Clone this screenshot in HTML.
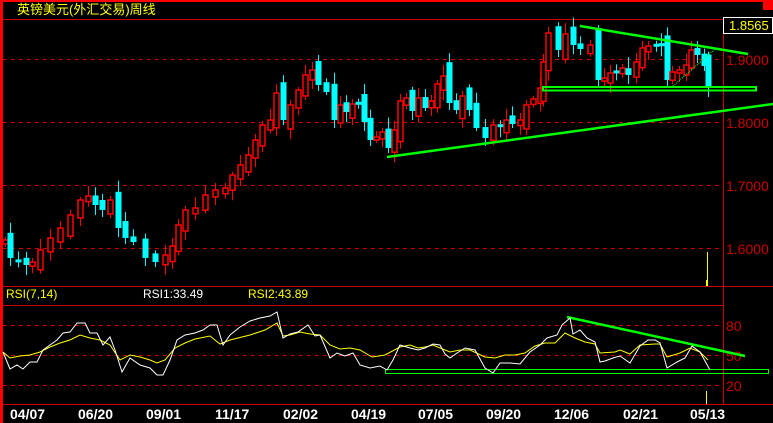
<!DOCTYPE html>
<html><head><meta charset="utf-8"><style>
html,body{margin:0;padding:0;background:#000;width:773px;height:423px;overflow:hidden}
svg{display:block}
text{font-family:"Liberation Sans","Noto Sans CJK SC",sans-serif}
</style></head><body>
<svg id="s" width="773" height="423" xmlns="http://www.w3.org/2000/svg">
<rect width="773" height="423" fill="#000"/>
<rect x="0" y="0" width="773" height="2" fill="#f00"/>
<rect x="0" y="0" width="3" height="423" fill="#f00"/>
<rect x="763" y="2" width="10" height="8" fill="#f00"/>
<text x="17" y="14" fill="#ff0" font-size="13">英镑美元(外汇交易)周线</text>
<line x1="3" y1="19.5" x2="773" y2="19.5" stroke="#c00"/>
<g stroke="#c00" stroke-dasharray="4,4">
<line x1="3" y1="59.5" x2="723" y2="59.5"/>
<line x1="3" y1="122.5" x2="723" y2="122.5"/>
<line x1="3" y1="185.5" x2="723" y2="185.5"/>
<line x1="3" y1="248.5" x2="723" y2="248.5"/>
<line x1="3" y1="325.5" x2="723" y2="325.5"/>
<line x1="3" y1="355.5" x2="723" y2="355.5"/>
<line x1="3" y1="385.5" x2="723" y2="385.5"/>
</g>
<line x1="3" y1="286.5" x2="773" y2="286.5" stroke="#c00"/>
<line x1="3" y1="305.5" x2="723" y2="305.5" stroke="#c00"/>
<line x1="3" y1="404.5" x2="773" y2="404.5" stroke="#c00"/>
<line x1="723.5" y1="19" x2="723.5" y2="405" stroke="#c00"/>
<g fill="#c00" font-size="14">
<text x="726" y="65">1.9000</text><text x="726" y="128">1.8000</text>
<text x="726" y="191">1.7000</text><text x="726" y="254">1.6000</text>
<text x="726" y="331">80</text><text x="726" y="361">50</text><text x="726" y="391">20</text>
</g>
<rect x="723.5" y="17.5" width="49" height="16" fill="#000" stroke="#fff"/>
<text x="729" y="30" fill="#ff0" font-size="13">1.8565</text>
<text x="6" y="298" fill="#ff0" font-size="12">RSI(7,14)</text>
<text x="143" y="298" fill="#fff" font-size="12">RSI1:33.49</text>
<text x="248" y="298" fill="#ff0" font-size="12">RSI2:43.89</text>
<g id="candles"></g>
<line x1="707.5" y1="252" x2="707.5" y2="286" stroke="#ff0"/>
<line x1="706.5" y1="280" x2="706.5" y2="286" stroke="#ff0"/>
<line x1="706.5" y1="391" x2="706.5" y2="404" stroke="#ff0"/>
<g stroke="#0f0" fill="none">
<line x1="580" y1="26" x2="748" y2="54" stroke-width="2.5"/>
<rect x="543" y="87" width="213" height="3.5" stroke-width="2"/>
<line x1="387" y1="157" x2="773" y2="104" stroke-width="2.5"/>
<line x1="673" y1="86" x2="714" y2="50" stroke-width="1" stroke-dasharray="1,1"/>
<line x1="567" y1="317" x2="745" y2="356" stroke-width="2.5"/>
<rect x="385.5" y="369.5" width="383" height="4" stroke-width="1"/>
</g>
<polyline fill="none" stroke="#ff0" stroke-width="1" points="3,352 10,358 20,356 30,355 40,352 50,347 60,343 70,340 80,335 90,338 100,340 110,345 120,360 130,355 140,357 150,360 157,363 165,360 175,348 185,343 195,339 210,336 220,344 230,340 250,335 265,330 277,323 283,336 290,335 300,332 310,334 320,335 330,345 340,349 350,348 360,350 372,357 385,355 400,347 410,345 418,348 425,347 433,345 440,348 450,352 460,350 470,350 485,357 495,358 505,355 515,355 525,353 535,346 545,343 555,343 565,333 575,338 585,342 595,344 600,353 615,352 620,350 630,354 640,345 655,344 660,344 667,357 680,353 690,348 700,352 708,360"/>
<polyline fill="none" stroke="#fff" stroke-width="1" points="3,352 10,369 17,365 23,369 30,362 37,362 43,350 50,345 57,340 63,333 70,332 77,323 85,323 90,333 97,333 103,345 110,337 115,350 122,372 130,358 140,365 150,368 157,375 163,375 170,360 177,340 185,335 195,333 203,330 210,325 217,325 223,345 230,335 240,327 250,321 260,318 270,316 277,312 283,338 290,334 298,332 308,325 315,336 320,335 330,358 337,353 345,356 353,353 360,365 370,368 380,366 387,370 393,360 400,345 410,348 418,350 425,348 433,344 440,345 445,354 450,358 457,353 465,348 475,350 485,368 493,373 500,363 510,363 520,364 530,352 540,345 547,338 557,335 562,325 570,318 573,334 580,330 587,338 595,342 600,362 605,361 613,358 620,356 630,363 640,346 648,340 655,340 660,343 667,368 677,362 685,358 692,346 700,352 710,370"/>
<g fill="#fff" font-family="Liberation Mono,monospace" font-weight="bold" font-size="14">
<text x="10" y="419">04/07</text><text x="78" y="419">06/20</text><text x="146" y="419">09/01</text>
<text x="215" y="419">11/17</text><text x="283" y="419">02/02</text><text x="351" y="419">04/19</text>
<text x="418" y="419">07/05</text><text x="486" y="419">09/20</text><text x="554" y="419">12/06</text>
<text x="623" y="419">02/21</text><text x="690" y="419">05/13</text>
</g>
</svg>
<script>
var p=[[5,240],[10,258],[18,262],[26,265],[32,262],[40,250],[50,238],[60,228],[70,215],[80,200],[88,196],[95,205],[102,210],[110,200],[118,228],[125,238],[133,242],[145,258],[155,262],[165,255],[172,246],[178,225],[185,210],[195,208],[205,195],[215,190],[225,188],[232,175],[240,165],[248,155],[255,140],[262,125],[270,120],[276,93],[283,120],[290,105],[298,90],[305,75],[312,70],[318,85],[326,92],[334,120],[340,105],[346,112],[352,104],[358,102],[364,122],[370,140],[376,137],[382,132],[388,148],[394,130],[400,101],[406,98],[412,111],[418,98],[425,108],[431,101],[437,84],[443,76],[449,103],[456,110],[462,96],[469,110],[476,128],[485,138],[493,125],[500,127],[506,120],[512,124],[520,120],[526,105],[533,99],[540,88],[543,62],[548,33],[558,50],[565,34],[573,45],[580,49],[590,45],[598,80],[604,78],[610,73],[616,72],[622,68],[628,75],[636,62],[642,48],[648,46],[656,44],[661,46],[667,80],[672,72],[679,70],[686,65],[691,50],[697,55],[704,66],[708,87]];
var g=document.getElementById('candles'),h='',prev=245;
for(var i=0;i<p.length;i++){var x=p[i][0],c=p[i][1],o=prev;prev=c;
o=c+(o-c)*1.4+((i%3)-1)*3;
var t=Math.min(o,c),b=Math.max(o,c);if(b-t<3){b=t+3;}
var hi=t-3-(i*7%9),lo=b+3+(i*5%8);var up=c<o;
var col=up?'#f00':'#0ff';
h+='<line x1="'+(x+.5)+'" y1="'+hi+'" x2="'+(x+.5)+'" y2="'+lo+'" stroke="'+col+'"/>';
if(up)h+='<rect x="'+(x-2)+'" y="'+t+'" width="5" height="'+(b-t)+'" fill="#000" stroke="#f00" stroke-width="1.5"/>';
else h+='<rect x="'+(x-2.5)+'" y="'+t+'" width="6" height="'+(b-t)+'" fill="#0ff"/>';}
g.innerHTML=h;
</script>
</body></html>
